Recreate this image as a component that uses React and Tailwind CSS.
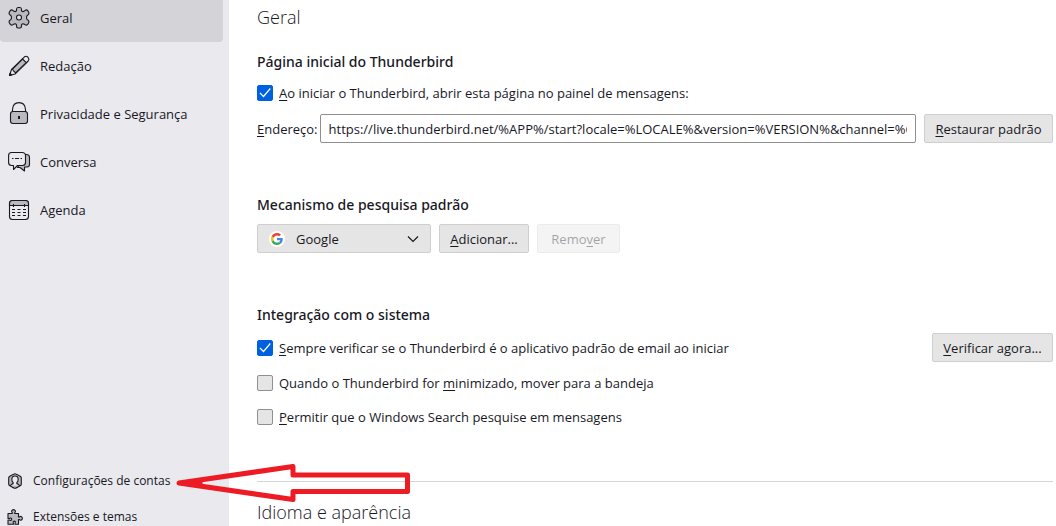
const FONT = "font-['Open_Sans','Noto_Sans',sans-serif]";

function Glyph({ box, className, children }) {
  return (
    <svg
      viewBox={`0 0 ${box} ${box}`}
      className={`shrink-0 ${className}`}
      fill="none"
      stroke="#18181f"
      strokeWidth="1.1"
      strokeLinecap="round"
      strokeLinejoin="round"
      aria-hidden="true"
    >
      {children}
    </svg>
  );
}

const GearIcon = () => (
  <Glyph box={24} className="size-6">
    <path
      fill="#bab9bf"
      d="M8.500 3.500Q8.500 1.500 10 1.500H12Q13.500 1.500 13.500 3.500V4.500Q13.800 5.400 14.800 5.600 16 5.500 17.300 4.300 18.600 3.400 19.700 4.600L20.700 6.200Q21.400 7.800 20.100 8.700 18.800 9.500 18.600 10.500V12.500Q18.800 13.500 20.100 14.300 21.400 15.300 20.700 16.800L19.700 18.400Q18.600 19.600 17.300 18.800 16 17.800 14.800 17.700 13.800 17.800 13.500 19V20Q13.500 22 12 22H10Q8.500 22 8.500 20V19Q8.200 17.900 7.200 17.700 6 17.700 4.700 18.800 3.400 19.600 2.300 18.400L1.300 16.800Q.600 15.300 1.900 14.300 3.200 13.500 3.400 12.500V10.500Q3.200 9.500 1.900 8.700.600 7.800 1.300 6.200L2.300 4.600Q3.400 3.400 4.700 4.300 6 5.500 7.200 5.600 8.200 5.400 8.500 4.500Z"
    />
    <circle cx="11" cy="11.500" r="2.500" fill="#e2e1e6" />
  </Glyph>
);

const PencilIcon = () => (
  <Glyph box={24} className="size-6">
    <path d="M3.500 15.500 16.500 2.800Q18 1.600 19.500 2.800L20.500 4Q21.500 5.500 20.200 7L7 20 1.500 21.500Z" fill="#eae9ee" />
    <path d="M4.500 15.200 14.500 5 18.200 8.700 7.800 18.700 6 17.500Z" fill="#bab9bf" />
    <path d="M1.500 21.500 2 19.300 3.700 20.900Z" fill="#18181f" />
  </Glyph>
);

const LockIcon = () => (
  <Glyph box={24} className="size-6">
    <path d="M4.500 9.500V7.500Q5 .600 11 .600T17.500 7.500V9.500" />
    <rect x="2.500" y="9.500" width="17" height="12" rx="2.500" fill="#bab9bf" />
    <path d="M11 14V17" strokeWidth="2" strokeLinecap="butt" />
  </Glyph>
);

const ChatIcon = () => (
  <Glyph box={24} className="size-6">
    <path fill="#bab9bf" d="M17.500 4.500H18.500Q21.500 4.500 21.500 7.500V14.500Q21.500 17 19 17H16.500V21L12 17.500H9.500Z" />
    <path
      fill="#eae9ee"
      d="M3.500 2.500H14Q17.500 2.500 17.500 5.500V12.500Q17.500 15.500 14.500 15.500H9.500L5.500 19.500V15.500H3.500Q.600 15.500.600 12.500V5.500Q.600 2.500 3.500 2.500Z"
    />
    <path d="M4 8.500H5.500M7 8.500H11M12.500 8.500H14" strokeLinecap="butt" />
  </Glyph>
);

const CalendarIcon = () => (
  <Glyph box={24} className="size-6">
    <rect x="1.500" y="2.500" width="19" height="19" rx="3" />
    <path fill="#bab9bf" d="M1.500 7.500V5.500Q1.500 2.500 4.500 2.500H17.500Q20.500 2.500 20.500 5.500V7.500Z" />
    <path d="M5.500 6V9M16.500 6V9M4 11.500H7M9.500 11.500H12.500M15 11.500H18M4 14.500H7M9.500 14.500H12.500M15 14.500H18M4 17.500H7M9.500 17.500H12.500M15 17.500H18" strokeLinecap="butt" />
  </Glyph>
);

const AccountIcon = () => (
  <Glyph box={16} className="size-4">
    <path fill="#bab9bf" d="M8 .700Q9 .700 13.500 3.500 14.300 4 14.300 5V11Q14.300 12 13.500 12.500 9 15.300 8 15.300T2.500 12.500Q1.700 12 1.700 11V5Q1.700 4 2.500 3.500 7 .700 8 .700Z" />
    <path fill="#eae9ee" d="M3.500 12.500Q4.500 11 6.200 10.600V9.600Q4.800 8.600 4.800 6.500 4.800 3 8 3T11.200 6.500Q11.200 8.600 9.800 9.600V10.600Q11.500 11 12.500 12.500" />
  </Glyph>
);

const PuzzleIcon = () => (
  <Glyph box={16} className="size-4">
    <path
      fill="#bab9bf"
      d="M1 4.500H5.200V3.500Q4.400 2.700 4.600 1.900 5.200.600 6.500.600T8.400 1.900Q8.600 2.700 7.800 3.500V4.500H11.500V8H12.500Q13.300 7.200 14.100 7.400 15.400 8 15.400 9.300T14.100 11.200Q13.300 11.400 12.500 10.600H11.500V15.300H8V14Q8.700 13.200 8.300 12.600 7.600 11.900 6.800 12.200 5.800 12.700 6.200 13.500L6.500 15.300H1V11H2.700Q3.500 11.700 4.200 11.300 4.900 10.500 4.600 9.700 4.100 8.700 3.200 9.100L2.500 9.500H1Z"
    />
  </Glyph>
);

const GoogleIcon = () => (
  <svg viewBox="0 0 48 48" className="size-3" aria-hidden="true">
    <path fill="#ea4335" d="M24 9.500c3.540 0 6.710 1.220 9.210 3.600l6.850-6.850C35.900 2.380 30.470 0 24 0 14.620 0 6.510 5.380 2.560 13.220l7.980 6.190C12.430 13.720 17.740 9.500 24 9.500z" />
    <path fill="#4285f4" d="M46.980 24.550c0-1.570-.15-3.090-.38-4.550H24v9.020h12.940c-.58 2.960-2.260 5.480-4.780 7.180l7.730 6c4.510-4.180 7.090-10.360 7.090-17.650z" />
    <path fill="#fbbc05" d="M10.530 28.590c-.48-1.450-.76-2.990-.76-4.590s.27-3.140.76-4.590l-7.980-6.190C.92 16.460 0 20.120 0 24s.92 7.540 2.560 10.780l7.970-6.190z" />
    <path fill="#34a853" d="M24 48c6.480 0 11.930-2.130 15.890-5.810l-7.730-6c-2.150 1.450-4.920 2.300-8.160 2.300-6.260 0-11.570-4.220-13.470-9.910l-7.980 6.190C6.510 42.620 14.620 48 24 48z" />
  </svg>
);

const categories = [
  { label: "Geral", Icon: GearIcon, active: true },
  { label: "Redação", Icon: PencilIcon },
  { label: "Privacidade e Segurança", Icon: LockIcon },
  { label: "Conversa", Icon: ChatIcon },
  { label: "Agenda", Icon: CalendarIcon },
];

const shortcuts = [
  { label: "Configurações de contas", Icon: AccountIcon },
  { label: "Extensões e temas", Icon: PuzzleIcon },
];

function Sidebar() {
  return (
    <aside className="flex w-[229px] shrink-0 flex-col bg-[#eae9ee]">
      <nav className="-mt-1.5 pr-1.5">
        {categories.map(({ label, Icon, active }) => (
          <a
            key={label}
            href="#"
            aria-current={active ? "page" : undefined}
            className={`flex h-12 items-center gap-2 rounded pl-2 ${active ? "bg-[#d4d3d8]" : ""}`}
          >
            <Icon />
            {label}
          </a>
        ))}
      </nav>
      <nav className="-mb-[9px] mt-auto text-[12px]">
        {shortcuts.map(({ label, Icon }) => (
          <a key={label} href="#" className="flex h-9 items-center gap-[10px] pl-[7px]">
            <Icon />
            {label}
          </a>
        ))}
      </nav>
    </aside>
  );
}

function SectionTitle({ children }) {
  return <h2 className="font-['Noto_Sans','Open_Sans',sans-serif] text-[14px] font-medium leading-5">{children}</h2>;
}

function Key({ children }) {
  return <span className="underline underline-offset-2">{children}</span>;
}

function Check({ id, defaultChecked, children }) {
  return (
    <div className="flex items-center gap-1.5">
      <span className="grid size-4 shrink-0">
        <input
          id={id}
          type="checkbox"
          defaultChecked={defaultChecked}
          className="peer col-start-1 row-start-1 size-4 appearance-none rounded-xs border border-[#8f8f8f] bg-[#e5e5e5] checked:border-[#0061e0] checked:bg-[#0061e0]"
        />
        <svg
          viewBox="0 0 16 16"
          className="pointer-events-none invisible col-start-1 row-start-1 size-4 peer-checked:visible"
          fill="none"
          stroke="#fff"
          strokeWidth="1.200"
          aria-hidden="true"
        >
          <path d="M3 8 6.500 11.500 13.300 3.500" />
        </svg>
      </span>
      <label htmlFor={id}>{children}</label>
    </div>
  );
}

function Button({ children, disabled, className = "" }) {
  return (
    <button
      type="button"
      disabled={disabled}
      className={`h-[29px] shrink-0 rounded-xs border border-[#cfcfcf] bg-[#e5e5e5] text-center disabled:opacity-40 ${className}`}
    >
      {children}
    </button>
  );
}

function Arrow() {
  return (
    <svg
      viewBox="0 0 236 40"
      className="pointer-events-none absolute bottom-[22px] left-[176px] h-10 w-[236px]"
      fill="none"
      stroke="#ed1c24"
      strokeWidth="5"
      aria-hidden="true"
    >
      <path d="M3 19 117 2.500V11H231.500V27.500H117V35.500Z" strokeLinejoin="round" />
      <path d="M3 19 25 16.500V21.500Z" fill="#ed1c24" strokeWidth="3" />
    </svg>
  );
}

export default function App() {
  return (
    <div className={`relative flex h-screen overflow-hidden bg-white text-[13px] leading-5 text-[#18181f] ${FONT}`}>
      <Sidebar />
      <main className="min-w-0 flex-1 pl-7 pr-[3px]">
        <h1 className="pt-[3px] text-[18px] font-light leading-7">Geral</h1>

        <section className="pt-[21px]">
          <SectionTitle>Página inicial do Thunderbird</SectionTitle>
          <div className="pt-[11px]">
            <Check id="start-page" defaultChecked>
              <Key>A</Key>o iniciar o Thunderbird, abrir esta página no painel de mensagens:
            </Check>
          </div>
          <div className="flex items-center gap-2 pt-[11px]">
            <div className="flex min-w-0 flex-1 items-center gap-0.5">
              <label htmlFor="address">
                <Key>E</Key>ndereço:
              </label>
              <input
                id="address"
                type="text"
                defaultValue="https://live.thunderbird.net/%APP%/start?locale=%LOCALE%&version=%VERSION%&channel=%CHANNEL%&os=%OS%&buildid=%APPBUILDID%"
                className="h-[29px] min-w-0 flex-1 rounded-xs border border-[#8f8f8f] bg-white px-2"
              />
            </div>
            <Button className="w-[129px]">
              <Key>R</Key>estaurar padrão
            </Button>
          </div>
        </section>

        <section className="pt-[52px]">
          <SectionTitle>Mecanismo de pesquisa padrão</SectionTitle>
          <div className="flex gap-2 pt-[9px]">
            <div className="grid w-[174px] items-center">
              <select
                aria-label="Mecanismo de pesquisa padrão"
                className="col-start-1 row-start-1 h-[29px] appearance-none rounded-xs border border-[#cfcfcf] bg-[#e5e5e5] pl-[38px]"
              >
                <option>Google</option>
              </select>
              <span className="pointer-events-none col-start-1 row-start-1 flex items-center justify-between pl-3 pr-3">
                <span className="grid size-4 place-items-center rounded-full bg-white">
                  <GoogleIcon />
                </span>
                <svg viewBox="0 0 12 12" className="size-3" fill="none" stroke="#18181f" strokeWidth="1.200" aria-hidden="true">
                  <path d="M1 3.500 6 8.500 11 3.500" />
                </svg>
              </span>
            </div>
            <Button className="w-[90px]">
              <Key>A</Key>dicionar...
            </Button>
            <Button className="w-[83px]" disabled>
              Remo<Key>v</Key>er
            </Button>
          </div>
        </section>

        <section className="pt-[52px]">
          <SectionTitle>Integração com o sistema</SectionTitle>
          <div className="flex items-center justify-between pt-2">
            <Check id="default-app" defaultChecked>
              <Key>S</Key>empre verificar se o Thunderbird é o aplicativo padrão de email ao iniciar
            </Check>
            <Button className="w-[121px]">
              <Key>V</Key>erificar agora...
            </Button>
          </div>
          <div className="flex flex-col gap-[14px] pt-[11px]">
            <Check id="tray">
              Quando o Thunderbird for <Key>m</Key>inimizado, mover para a bandeja
            </Check>
            <Check id="search">
              <Key>P</Key>ermitir que o Windows Search pesquise em mensagens
            </Check>
          </div>
        </section>

        <hr className="mt-[54px] border-[#d4d4d8]" />
        <h1 className="pt-4 text-[18px] font-light leading-7">Idioma e aparência</h1>
      </main>
      <Arrow />
    </div>
  );
}
